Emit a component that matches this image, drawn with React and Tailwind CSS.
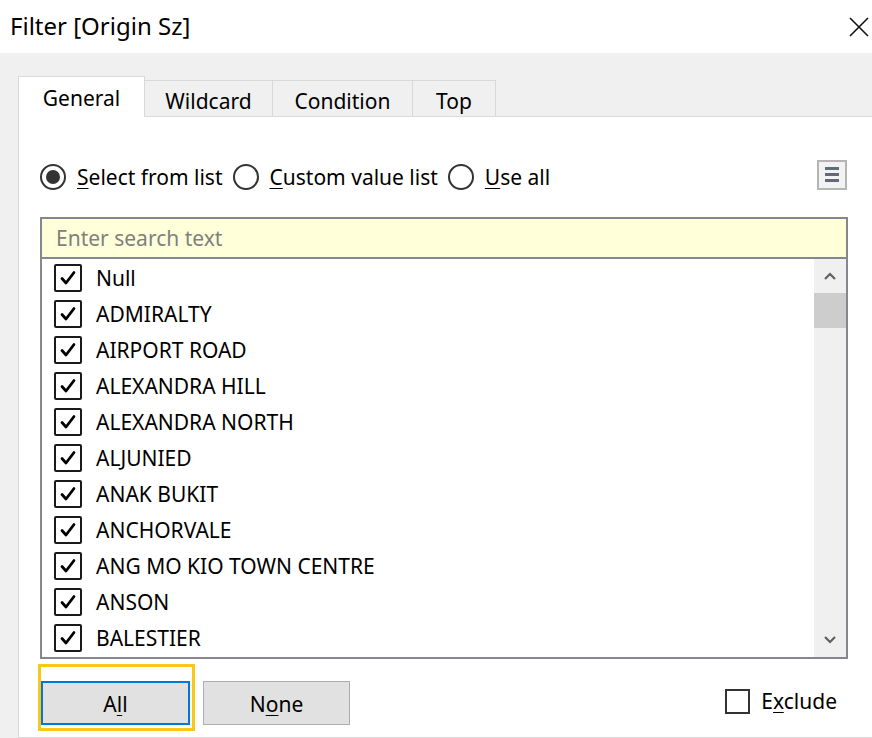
import { useState } from 'react';

const items = [
  'Null',
  'ADMIRALTY',
  'AIRPORT ROAD',
  'ALEXANDRA HILL',
  'ALEXANDRA NORTH',
  'ALJUNIED',
  'ANAK BUKIT',
  'ANCHORVALE',
  'ANG MO KIO TOWN CENTRE',
  'ANSON',
  'BALESTIER',
];

const tabs = [
  { name: 'General', w: 'w-[127px]' },
  { name: 'Wildcard', w: 'w-[128px]' },
  { name: 'Condition', w: 'w-[140px]' },
  { name: 'Top', w: 'w-[83px]' },
];

function Check({ checked }) {
  return (
    <span className="flex items-center justify-center w-[28px] h-[28px] border-2 border-[#1a1a1a] rounded-[2px] bg-white shrink-0">
      {checked && (
        <svg width="18" height="18" viewBox="0 0 18 18">
          <path d="M3 9.5 L7 14 L15 3.5" fill="none" stroke="#000" strokeWidth="2.8" strokeLinecap="round" strokeLinejoin="round" />
        </svg>
      )}
    </span>
  );
}

function Radio({ checked, label }) {
  return (
    <label className="flex items-center gap-[11px]">
      <span className="flex items-center justify-center w-[26px] h-[26px] rounded-full border-2 border-[#333]">
        {checked && <span className="w-[14px] h-[14px] rounded-full bg-[#333]" />}
      </span>
      <span>
        <span className="underline underline-offset-[3px] decoration-1">{label[0]}</span>
        {label.slice(1)}
      </span>
    </label>
  );
}

export default function App() {
  const [tab] = useState('General');

  return (
    <div className="w-[872px] h-[738px] overflow-hidden bg-white text-black font-['Noto_Sans',sans-serif] text-[21px] leading-none">
      <div className="flex items-center justify-between h-[53px] pl-[10px] pr-[2px]">
        <span className="text-[24px] pb-[2px]">Filter [Origin Sz]</span>
        <svg width="20" height="20" viewBox="0 0 20 20" className="mr-[1px] mt-[1px]">
          <path d="M1 1 L19 19 M19 1 L1 19" stroke="#111" strokeWidth="1.6" />
        </svg>
      </div>

      <div className="h-[685px] bg-[#f0f0f0] pl-[18px] pt-[23px]">
        <div className="flex items-end h-[41px]">
          {tabs.map((t) => (
            <div
              key={t.name}
              className={
                t.name === tab
                  ? `relative z-10 flex items-center justify-center ${t.w} h-[41px] bg-white border border-b-0 border-[#d9d9d9] pt-[3px]`
                  : `flex items-center justify-center ${t.w} h-[37px] border border-l-0 border-b-0 border-[#d9d9d9] pt-[4px]`
              }
            >
              {t.name}
            </div>
          ))}
        </div>
        <div className="-mt-px h-[622px] bg-white border border-r-0 border-[#d9d9d9] pl-[21px] pr-[24px]">
          <div className="flex items-center h-[122px] -mt-[1px]">
            <div className="flex items-center gap-[10px]">
              <Radio checked label="Select from list" />
              <Radio label="Custom value list" />
              <Radio label="Use all" />
            </div>
            <div className="ml-auto mt-[-5px] flex flex-col items-center justify-center gap-[3px] w-[30px] h-[30px] border-2 border-[#b4b4b4] bg-[#f2f2f2] mr-[1px]">
              <span className="w-[14px] h-[3px] bg-[#5f6b7a]" />
              <span className="w-[14px] h-[3px] bg-[#5f6b7a]" />
              <span className="w-[14px] h-[3px] bg-[#5f6b7a]" />
            </div>
          </div>

          <div className="-mt-[21px] border-2 border-[#85878d]">
            <div className="h-[40px] flex items-center bg-[#ffffd9] border-b-2 border-[#85878d] pl-[14px] pt-[1px] text-[#808080]">
              Enter search text
            </div>
            <div className="flex h-[398px]">
              <div className="flex-1 pl-[12px] pt-[1px]">
                {items.map((it) => (
                  <div key={it} className="flex items-center h-[36px] gap-[14px]">
                    <Check checked />
                    <span className="pt-[1px]">{it}</span>
                  </div>
                ))}
              </div>
              <div className="w-[32px] bg-[#f0f0f0] flex flex-col items-center">
                <div className="h-[34px] flex items-center justify-center">
                  <svg width="12" height="8" viewBox="0 0 12 8">
                    <path d="M1 7 L6 2 L11 7" fill="none" stroke="#606060" strokeWidth="2.2" />
                  </svg>
                </div>
                <div className="w-[32px] h-[35px] bg-[#cdcdcd]" />
                <div className="flex-1" />
                <div className="h-[34px] flex items-center justify-center">
                  <svg width="12" height="8" viewBox="0 0 12 8">
                    <path d="M1 1 L6 6 L11 1" fill="none" stroke="#606060" strokeWidth="2.2" />
                  </svg>
                </div>
              </div>
            </div>
          </div>

          <div className="flex items-start mt-[5px]">
            <div className="-ml-[2px] border-[3px] border-[#f7c719] pt-[14px] pr-[2px] pb-[3px]">
              <button className="block w-[149px] h-[44px] bg-[#e1e1e1] border-2 border-[#0078d7] pt-[2px]">
                A<span className="underline underline-offset-[3px] decoration-1">l</span>l
              </button>
            </div>
            <button className="ml-[8px] mt-[17px] w-[147px] h-[44px] bg-[#e1e1e1] border border-[#adadad] pt-[2px]">
              N<span className="underline underline-offset-[3px] decoration-1">o</span>ne
            </button>
            <label className="ml-auto mt-[25px] mr-[11px] flex items-center gap-[11px]">
              <span className="w-[25px] h-[25px] border-2 border-[#333] bg-white" />
              <span>
                E<span className="underline underline-offset-[3px] decoration-1">x</span>clude
              </span>
            </label>
          </div>
        </div>
      </div>
    </div>
  );
}
